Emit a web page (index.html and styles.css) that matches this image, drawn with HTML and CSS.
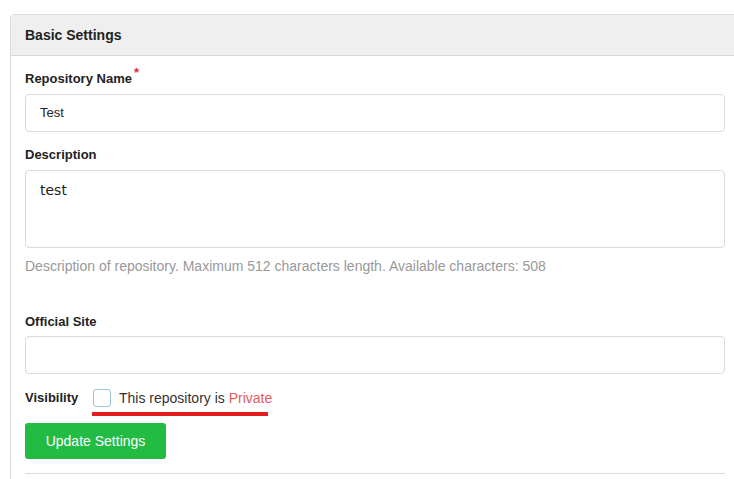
FILE: index.html
```html
<!DOCTYPE html>
<html>
<head>
<meta charset="utf-8">
<link rel="stylesheet" href="styles.css">
</head>
<body>
<div class="panel">
  <div class="panel-header">Basic Settings</div>
  <div class="panel-body">
    <div class="field">
      <label class="label">Repository Name<span class="req">*</span></label>
      <div class="input">Test</div>
    </div>
    <div class="field">
      <label class="label">Description</label>
      <div class="textarea">test</div>
      <div class="help">Description of repository. Maximum 512 characters length. Available characters: 508</div>
    </div>
    <div class="field field-site">
      <label class="label">Official Site</label>
      <div class="input"></div>
    </div>
    <div class="visibility">
      <span class="label vis-label">Visibility</span>
      <label class="check-wrap">
        <span class="checkbox"></span>
        <span class="check-text">This repository is <span class="private">Private</span></span>
      </label>
    </div>
    <button class="btn">Update Settings</button>
    <div class="divider"></div>
  </div>
</div>
</body>
</html>
```
FILE: styles.css
```css
html, body {
  margin: 0;
  padding: 0;
  background: #fff;
  overflow: hidden;
}
body {
  font-family: "Liberation Sans", Arial, sans-serif;
  color: #333;
  padding-top: 14px;
  padding-left: 10px;
}
.panel {
  width: 728px;
  border: 1px solid #dcdcdc;
  border-radius: 4px 4px 0 0;
  box-sizing: border-box;
  min-height: 470px;
}
.panel-header {
  height: 40px;
  line-height: 40px;
  background: #efefef;
  border-bottom: 1px solid #d8d8d8;
  border-radius: 4px 4px 0 0;
  padding-left: 14px;
  font-weight: bold;
  font-size: 14px;
  color: #222;
}
.panel-body {
  padding: 14px 14px 0 14px;
}
.field {
  margin-bottom: 14px;
}
.label {
  display: block;
  font-weight: bold;
  font-size: 13px;
  line-height: 18px;
  margin-bottom: 6px;
  color: #222;
}
.req {
  color: #e03030;
  font-size: 13px;
  position: relative;
  top: -6px;
  margin-left: 2px;
}
.input {
  width: 700px;
  height: 38px;
  box-sizing: border-box;
  border: 1px solid #dadada;
  border-radius: 4px;
  padding: 0 14px;
  font-size: 13px;
  line-height: 36px;
  color: #222;
}
.textarea {
  width: 700px;
  height: 78px;
  box-sizing: border-box;
  border: 1px solid #dadada;
  border-radius: 4px;
  padding: 9px 14px;
  font-family: "DejaVu Sans", sans-serif;
  font-size: 14px;
  line-height: 20px;
  color: #222;
}
.help {
  margin-top: 8px;
  font-size: 14px;
  line-height: 20px;
  color: #999;
}
.field-site {
  margin-top: 37px;
  margin-bottom: 12px;
}
.field-site .label {
  margin-bottom: 5px;
}
.visibility {
  display: flex;
  align-items: flex-start;
  height: 37px;
}
.vis-label {
  width: 67px;
  margin: 3px 0 0 0;
}
.check-wrap {
  display: flex;
  align-items: center;
  width: 175px;
  white-space: nowrap;
  border-bottom: 4px solid #e11d1d;
  padding: 3px 0 5px 1px;
  height: 18px;
}
.checkbox {
  flex: none;
  width: 18px;
  height: 18px;
  box-sizing: border-box;
  border: 1px solid #9ac8d8;
  border-radius: 3px;
  margin-right: 8px;
}
.check-text {
  font-size: 14px;
  color: #333;
}
.private {
  color: #e05c5c;
}
.btn {
  display: block;
  width: 141px;
  height: 36px;
  border: none;
  border-radius: 3px;
  background: #22bb44;
  color: #fff;
  font-family: "Liberation Sans", Arial, sans-serif;
  font-size: 14px;
  padding: 0;
}
.divider {
  width: 700px;
  margin-top: 14px;
  border-top: 1px solid #dcdcdc;
}
```
